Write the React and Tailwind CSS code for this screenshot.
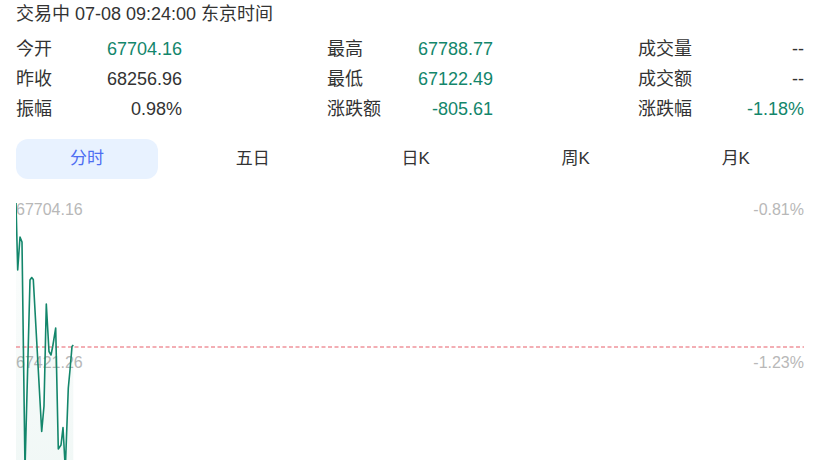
import React from "react";

const GREEN = "text-[#13866b]";

const stats = [
  [
    { label: "今开", value: "67704.16", green: true },
    { label: "昨收", value: "68256.96" },
    { label: "振幅", value: "0.98%" },
  ],
  [
    { label: "最高", value: "67788.77", green: true },
    { label: "最低", value: "67122.49", green: true },
    { label: "涨跌额", value: "-805.61", green: true },
  ],
  [
    { label: "成交量", value: "--" },
    { label: "成交额", value: "--" },
    { label: "涨跌幅", value: "-1.18%", green: true },
  ],
];

const tabs = ["分时", "五日", "日K", "周K", "月K"];

// intraday price points, in chart-box coordinates
const pts = [
  [0, 24], [1.7, 91], [4, 58], [6, 63], [9, 290], [14, 101], [15.7, 98.5],
  [17.3, 100.5], [25.7, 252.5], [28, 227], [30.3, 125], [33, 172.5],
  [35, 176], [36.7, 167.5], [39.7, 149], [42.3, 270], [45, 266],
  [47, 248.5], [49.3, 290], [52.3, 209], [54, 191], [56, 167.5], [57.3, 166],
];

function Chart() {
  const line = pts.map((p) => p.join(",")).join(" ");
  const area = `0,281 ${line} 57.3,281`;
  return (
    <div className="relative h-[281px] w-full">
      <span className="absolute left-0 top-[21px] text-[16px] leading-5 text-[#b8b8b8]">67704.16</span>
      <span className="absolute left-0 top-[174px] text-[16px] leading-5 text-[#b8b8b8]">67421.26</span>
      <span className="absolute right-0 top-[21px] text-[16px] leading-5 text-[#b8b8b8]">-0.81%</span>
      <span className="absolute right-0 top-[174px] text-[16px] leading-5 text-[#b8b8b8]">-1.23%</span>
      <svg className="absolute inset-0 h-full w-full overflow-hidden" viewBox="0 0 788 281" preserveAspectRatio="none">
        <defs>
          <linearGradient id="areaFill" x1="0" y1="0" x2="0" y2="1">
            <stop offset="0" stopColor="#13866b" stopOpacity="0.01" />
            <stop offset="1" stopColor="#13866b" stopOpacity="0.06" />
          </linearGradient>
        </defs>
        <polygon points={area} fill="url(#areaFill)" />
        <path d="M0 168 H788" fill="none" stroke="#f0949c" strokeWidth="1.6" strokeDasharray="4 2.5" />
        <polyline points={line} fill="none" stroke="#13866b" strokeWidth="1.6" strokeLinejoin="round" />
      </svg>
    </div>
  );
}

export default function App() {
  return (
    <div
      className="h-[460px] w-[820px] overflow-hidden bg-white px-4 text-[#333]"
      style={{ fontFamily: '"Liberation Sans", "Noto Sans CJK SC", sans-serif' }}
    >
      <div className="h-[26px] pt-px text-[18px] leading-[26px]">交易中 07-08 09:24:00 东京时间</div>

      <div className="mt-[8px] flex justify-between">
        {stats.map((col, i) => (
          <div key={i} className="flex w-[166px] flex-col">
            {col.map((s) => (
              <div key={s.label} className="flex h-[30px] items-center justify-between text-[18px]">
                <span>{s.label}</span>
                <span className={s.green ? GREEN : ""}>{s.value}</span>
              </div>
            ))}
          </div>
        ))}
      </div>

      <div className="mt-[15px] flex justify-between">
        {tabs.map((t, i) => (
          <div
            key={t}
            className={
              "flex h-10 items-center justify-center rounded-xl px-[54px] text-[17px] " +
              (i === 0 ? "bg-[#e8f2ff] text-[#4e6ef2]" : "text-[#333]")
            }
          >
            {t}
          </div>
        ))}
      </div>

      <Chart />
    </div>
  );
}
